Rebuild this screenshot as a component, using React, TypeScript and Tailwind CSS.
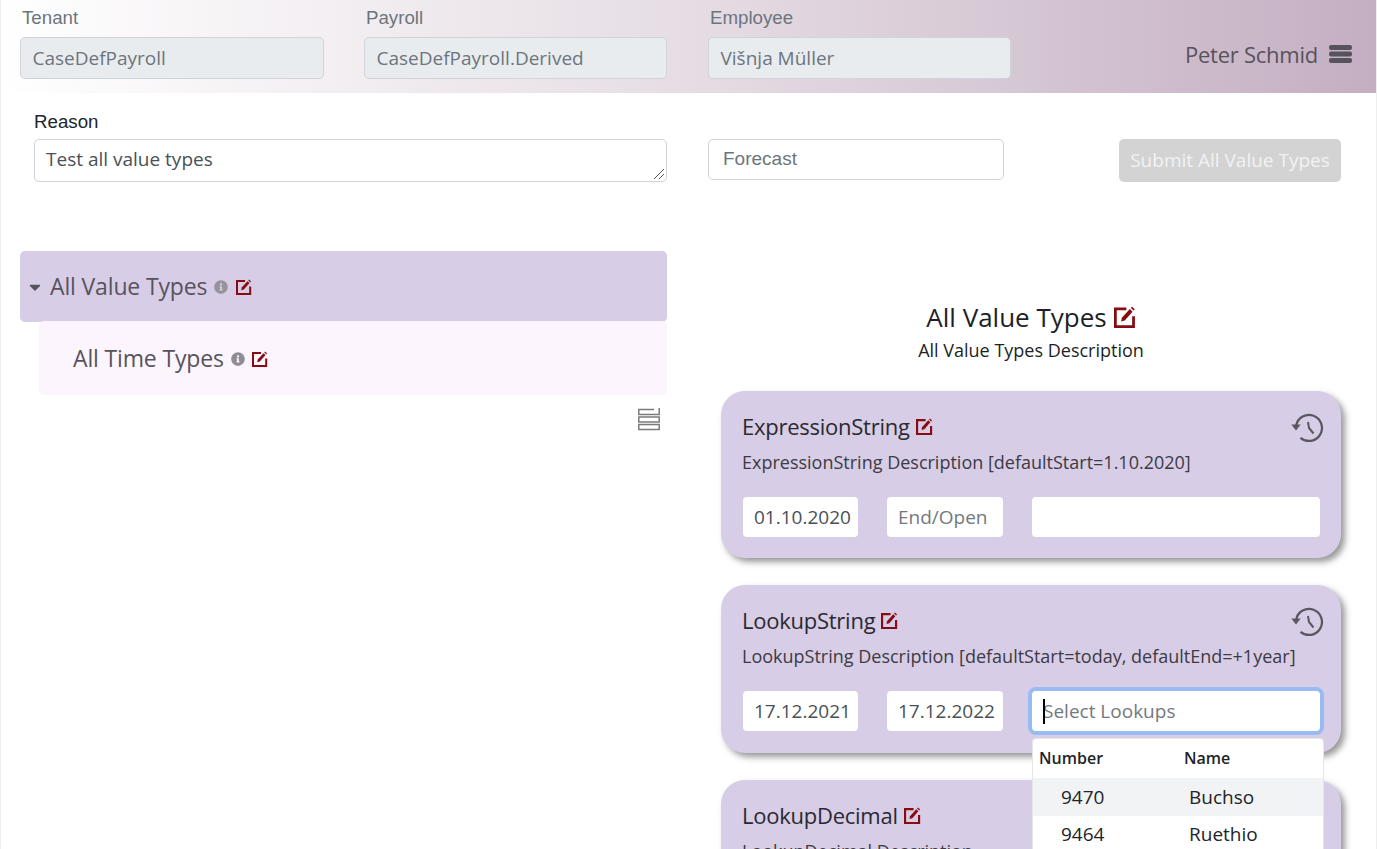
import { FaCaretDown, FaInfoCircle } from "react-icons/fa";

const sans = "font-['Open_Sans','Noto_Sans',sans-serif]";
const arial = "font-['Liberation_Sans',Arial,sans-serif]";

function EditIcon({ size = 16 }: { size?: number }) {
  return (
    <svg width={size} height={size} viewBox="0 0 16 16" fill="none" className="shrink-0">
      <path d="M9 2H1v13h13.2V7.5" stroke="#860c12" strokeWidth="2" />
      <path d="M5.2 11.2l.5-2.6 5.8-6.4 2 1.9-5.7 6.4z" fill="#860c12" />
      <path d="M12.3 1.4l.9-.9 1.9 1.9-.9.9z" fill="#860c12" />
    </svg>
  );
}

function HistoryIcon() {
  return (
    <svg width="34" height="34" viewBox="0 0 34 34" fill="none" stroke="#5b5762" strokeWidth="2.3">
      <path d="M5.2 14.5A13 13 0 1 1 9.5 26.8" />
      <path d="M0.3 13.5h9.4L5 19.5z" fill="#5b5762" stroke="none" />
      <path d="M17 11l1 6 4.5 5.5" strokeWidth="2" />
    </svg>
  );
}

function StackIcon() {
  return (
    <svg width="24" height="23" viewBox="0 0 24 23" fill="none" stroke="#7c7a7e" strokeWidth="1.5">
      <path d="M17 1.5H1.8v5H22.2V0" />
      <rect x="1.8" y="9" width="20.4" height="5" />
      <rect x="1.8" y="16.5" width="20.4" height="5" />
    </svg>
  );
}

function MenuIcon() {
  return (
    <svg width="23" height="18" viewBox="0 0 23 18" fill="#57535c">
      <rect width="23" height="5" rx="2" />
      <rect y="6.5" width="23" height="5" rx="2" />
      <rect y="13" width="23" height="5" rx="2" />
    </svg>
  );
}

function HeaderField({ label, value, className }: { label: string; value: string; className: string }) {
  return (
    <div className={`${className} flex flex-col`}>
      <label className={`${arial} h-[37px] pl-[2px] pt-[6px] text-[18.7px] leading-[24px] text-[#6c757d]`}>{label}</label>
      <div className={`${sans} flex h-[42px] items-center rounded-[5px] border border-[#ced4da] bg-[#e9ecef] pl-[11.5px] text-[19px] text-[#6c757d]`}>
        {value}
      </div>
    </div>
  );
}

function DateBox({ value, muted, className }: { value: string; muted?: boolean; className: string }) {
  return (
    <div className={`${className} flex h-10 items-center rounded-[4px] bg-white pl-[11px] text-[19px] whitespace-nowrap ${muted ? "text-[#737980]" : "text-[#495057]"}`}>
      {value}
    </div>
  );
}

function FieldCard({
  name,
  desc,
  start,
  end,
  muted,
  lookup,
}: {
  name: string;
  desc: string;
  start: string;
  end: string;
  muted?: boolean;
  lookup?: boolean;
}) {
  return (
    <div className={`relative rounded-[24px] bg-[#d7cde6] pl-[21px] pr-[20px] pt-[18px] shadow-[4px_4px_6px_rgba(70,70,70,0.55)] ${lookup ? "h-[168px]" : "h-[167px]"}`}>
      <div className="flex h-[34px] justify-between">
        <div className="flex items-center gap-[6px] text-[22px] tracking-[-0.25px] text-[#2b2930]">
          {name}
          <EditIcon size={17} />
        </div>
        <div className="-mr-[4px] mt-[2px]">
          <HistoryIcon />
        </div>
      </div>
      <div className="mt-[7px] text-[18px] leading-[24px] whitespace-nowrap text-[#3d3a44]">{desc}</div>
      <div className="mt-[23px] flex">
        <DateBox value={start} className="ml-px w-[115px]" />
        <DateBox value={end} muted={muted} className="ml-[29px] w-[116px]" />
        {lookup ? (
          <div className="relative ml-[29px] flex h-10 w-[288px] items-center rounded-[4px] bg-white pl-[11px] text-[19px] text-[#737980] shadow-[0_0_0_4px_#99bbf2]">
            <span className="absolute left-[11px] top-[8px] h-[25px] w-[2px] bg-black" />
            Select Lookups
          </div>
        ) : (
          <div className="ml-[29px] h-10 w-[288px] rounded-[4px] bg-white" />
        )}
      </div>
    </div>
  );
}

export default function App() {
  return (
    <div className={`${sans} relative h-[849px] w-[1377px] overflow-hidden border-x border-[#eeeeee] bg-white`}>
      <header className="flex h-[93px] bg-gradient-to-r from-white via-[#e6dde4] via-50% to-[#c4afc2] pl-[19px]">
        <HeaderField label="Tenant" value="CaseDefPayroll" className="w-[304px]" />
        <HeaderField label="Payroll" value="CaseDefPayroll.Derived" className="ml-[40px] w-[303px]" />
        <HeaderField label="Employee" value="Višnja Müller" className="ml-[41px] w-[303px]" />
        <div className="ml-auto mr-[24px] mt-[38px] flex h-[32px] items-center gap-[11px] text-[22px] tracking-[-0.25px] text-[#57535c]">
          Peter Schmid
          <MenuIcon />
        </div>
      </header>

      <section className="flex pl-[33px]">
        <div className="w-[633px]">
          <label className={`${arial} block pt-[17px] text-[18.7px] leading-[24px] text-[#212529]`}>Reason</label>
          <div className="relative mt-[5px] h-[43px] rounded-[5px] border border-[#ced4da] bg-white pl-[11px] pt-[6px] text-[19px] leading-[27px] text-[#495057]">
            Test all value types
            <svg width="12" height="12" viewBox="0 0 12 12" className="absolute bottom-[1px] right-[1px]" stroke="#555555" strokeWidth="1">
              <path d="M1 11L11 1M6 11l5-5" />
            </svg>
          </div>
        </div>
        <div className={`${arial} ml-[41px] mt-[46px] flex h-[41px] w-[296px] items-center rounded-[5px] border border-[#ced4da] bg-white pl-[14px] text-[19px] text-[#6c757d]`}>
          Forecast
        </div>
        <button className="ml-[115px] mt-[46px] h-[43px] w-[222px] rounded-[5px] bg-[#d3d3d3] text-[19px] text-[#f2f2f2]">
          Submit All Value Types
        </button>
      </section>

      <main className="flex pl-[19px]">
        <aside className="w-[647px] pt-[69px]">
          <div className="flex h-[71px] items-center rounded-[5px] bg-[#d7cde6] pl-[6px] text-[23px] tracking-[-0.15px] text-[#57535c]">
            <FaCaretDown size={18} color="#57535c" />
            <span className="ml-[6px]">All Value Types</span>
            <FaInfoCircle size={14} color="#96939c" className="ml-[7px]" />
            <span className="ml-[8px]">
              <EditIcon />
            </span>
          </div>
          <div className="relative -mt-px ml-[19px] flex h-[74px] items-center rounded-[5px] bg-[#fcf5fd] pl-[34px] pt-[1px] text-[23px] tracking-[-0.15px] text-[#57535c]">
            All Time Types
            <FaInfoCircle size={14} color="#8f8c95" className="ml-[7px]" />
            <span className="ml-[7px]">
              <EditIcon />
            </span>
          </div>
          <div className="mr-[6px] mt-[13px] flex justify-end">
            <StackIcon />
          </div>
        </aside>

        <div className="relative ml-[54px] w-[620px] pt-[117px]">
          <div className="flex items-center justify-center gap-[7px] text-[26px] leading-[36px] text-[#211f26]">
            All Value Types
            <EditIcon size={22} />
          </div>
          <div className="mt-[3px] text-center text-[18px] leading-[24px] text-[#211f26]">All Value Types Description</div>
          <div className="mt-[29px] flex flex-col gap-[27px]">
            <FieldCard
              name="ExpressionString"
              desc="ExpressionString Description [defaultStart=1.10.2020]"
              start="01.10.2020"
              end="End/Open"
              muted
            />
            <FieldCard
              name="LookupString"
              desc="LookupString Description [defaultStart=today, defaultEnd=+1year]"
              start="17.12.2021"
              end="17.12.2022"
              lookup
            />
            <FieldCard name="LookupDecimal" desc="LookupDecimal Description" start="" end="" />
          </div>

          {/* lookup dropdown sits over the cards */}
          <div className="absolute left-[311px] top-[556px] w-[292px] rounded-t-[4px] border border-[#e6e6e6] bg-white">
            <div className="flex h-[39px] items-center pb-[2px] pl-[6px] text-[16px] font-semibold text-[#212529]">
              <span className="w-[145px]">Number</span>
              <span>Name</span>
            </div>
            <div className="flex h-[38px] items-center bg-[#f2f3f5] pl-[28px] text-[19px] text-[#212529]">
              <span className="w-[128px]">9470</span>
              <span>Buchso</span>
            </div>
            <div className="flex h-[36px] items-center pl-[28px] text-[19px] text-[#212529]">
              <span className="w-[128px]">9464</span>
              <span>Ruethio</span>
            </div>
          </div>
        </div>
      </main>
    </div>
  );
}
